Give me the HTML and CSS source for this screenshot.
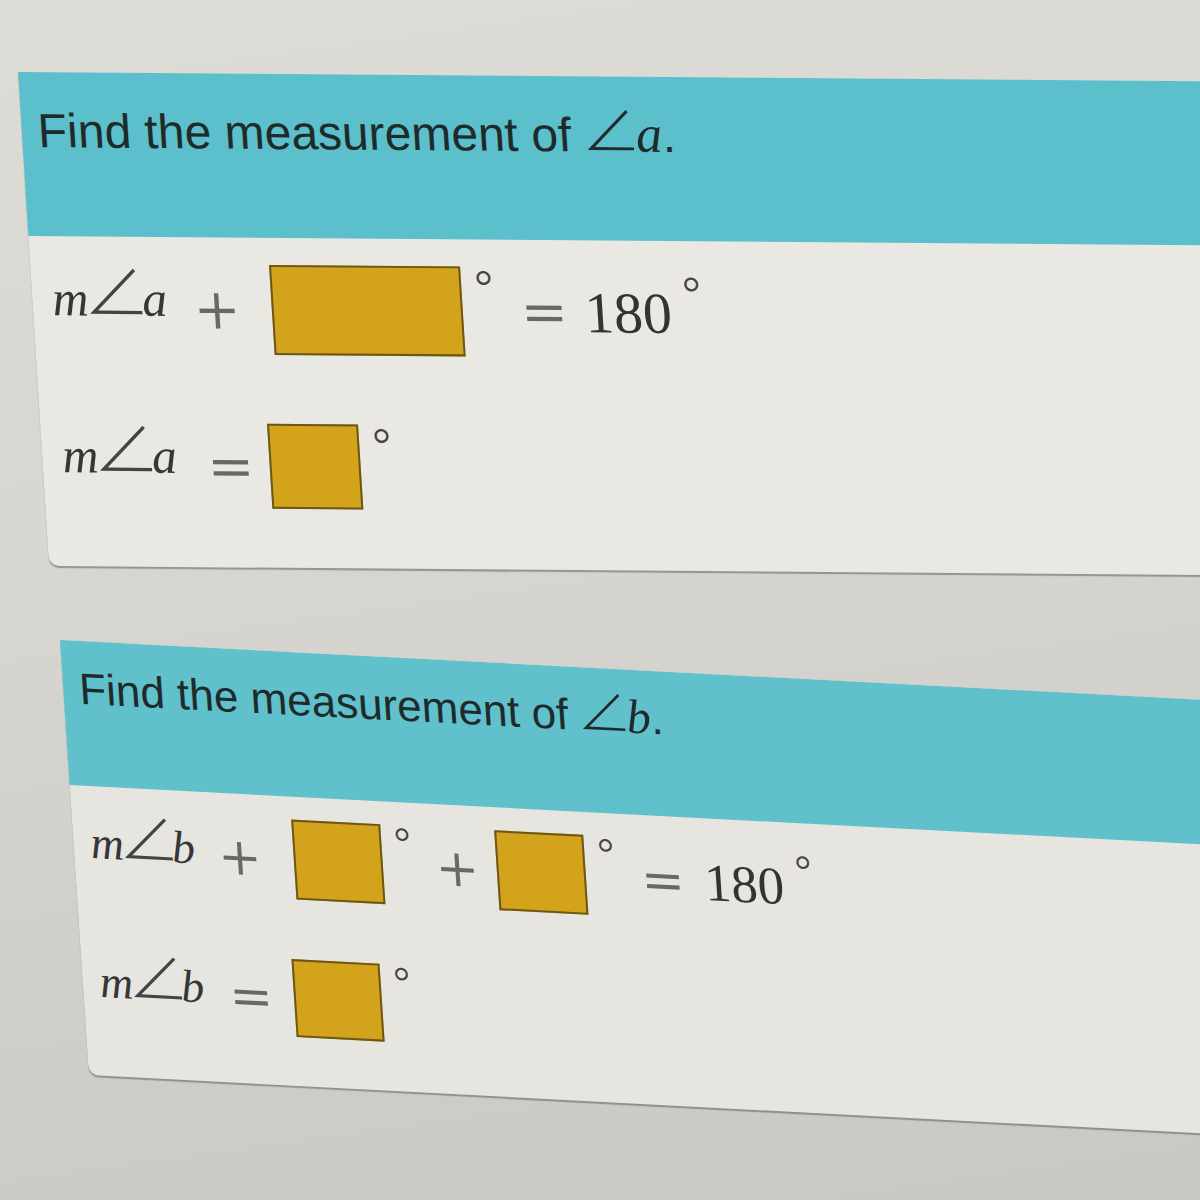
FILE: index.html
```html
<!DOCTYPE html>
<html lang="en">
<head>
<meta charset="utf-8">
<title>Find the measurement of an angle</title>
<link rel="stylesheet" href="styles.css">
</head>
<body>
<main class="page">
  <section class="card card-a">
    <div class="card-head">
      <p class="prompt">Find the measurement of <span class="pm"><span class="ang">∠</span><i>a</i></span>.</p>
    </div>
    <div class="card-body">
      <div class="eq eq-1">
        <span class="lbl"><i>m</i><span class="ang">∠</span><i>a</i></span>
        <span class="op op-plus">+</span>
        <span class="box box-wide"></span>
        <span class="deg">°</span>
        <span class="rhs"><span class="op op-eq">=</span><span class="num">180</span><span class="deg">°</span></span>
      </div>
      <div class="eq eq-2">
        <span class="lbl"><i>m</i><span class="ang">∠</span><i>a</i></span>
        <span class="op op-eq">=</span>
        <span class="box box-sq"></span>
        <span class="deg">°</span>
      </div>
    </div>
  </section>

  <section class="card card-b">
    <div class="card-head">
      <p class="prompt">Find the measurement of <span class="pm"><span class="ang">∠</span><i>b</i></span>.</p>
    </div>
    <div class="card-body">
      <div class="eq eq-1">
        <span class="lbl"><i>m</i><span class="ang">∠</span><i>b</i></span>
        <span class="op op-plus">+</span>
        <span class="box"></span>
        <span class="deg">°</span>
        <span class="op op-plus op-mid">+</span>
        <span class="box"></span>
        <span class="deg">°</span>
        <span class="rhs"><span class="op op-eq">=</span><span class="num">180</span><span class="deg">°</span></span>
      </div>
      <div class="eq eq-2">
        <span class="lbl"><i>m</i><span class="ang">∠</span><i>b</i></span>
        <span class="op op-eq">=</span>
        <span class="box"></span>
        <span class="deg">°</span>
      </div>
    </div>
  </section>
</main>
</body>
</html>
```

FILE: styles.css
```css
* {
  box-sizing: border-box;
}

html,
body {
  margin: 0;
  height: 100%;
  overflow: hidden;
}

body {
  background: linear-gradient(172deg, #dedcd6 0%, #d7d5cf 45%, #cac8c2 100%);
  font-family: "Liberation Sans", Arial, sans-serif;
  color: #222;
}

.page {
  padding: 72px 0 0 18px;
}

/* ---------- cards ---------- */

.card {
  width: 1340px;
  transform-origin: 0 0;
  background: #e9e8e3;
  border-bottom-left-radius: 10px;
  box-shadow: 0 2px 1px rgba(95, 92, 86, 0.55);
}

.card-a {
  transform: skew(3.6deg, 0.45deg);
}

.card-b {
  margin: 74px 0 0 42px;
  transform: skew(3.8deg, 3deg);
  background: #e6e5e0;
}

.card-head {
  background: #5cbfcc;
}

.card-a .card-head {
  padding: 31px 16px 78px;
}

.card-b .card-head {
  padding: 23px 16px 71px;
  background: #60c0cb;
}

.prompt {
  margin: 0;
  line-height: 1.15;
  color: #1f2b2a;
  white-space: nowrap;
}

.card-a .prompt {
  font-size: 48px;
}

.card-b .prompt {
  font-size: 44px;
}

.pm {
  font-family: "Liberation Serif", "DejaVu Serif", serif;
  line-height: 0;
}

.pm i {
  font-size: 1.1em;
  margin-left: 1px;
}

.ang {
  font-family: "Noto Sans CJK JP", "DejaVu Sans", sans-serif;
  font-style: normal;
  font-weight: 300;
  line-height: 0;
}

.prompt .ang {
  font-size: 1.25em;
  margin: 0 -6px 0 -4px;
}

/* ---------- equations ---------- */

.card-body {
  display: flex;
  flex-direction: column;
}

.card-a .card-body {
  padding: 27px 16px 59px 20px;
  gap: 69px;
}

.card-b .card-body {
  padding: 23px 14px 49px 17px;
  gap: 60px;
}

.eq {
  display: flex;
  align-items: center;
}

.lbl {
  font-family: "Liberation Serif", "DejaVu Serif", serif;
  line-height: 1;
  color: #363636;
  white-space: nowrap;
}

.lbl .ang {
  font-size: 1.35em;
  margin: 0 -8px 0 -6px;
  color: #444;
}

.card-a .lbl {
  font-size: 50px;
  margin-bottom: 20px;
}

.card-b .lbl {
  font-size: 46px;
  margin-bottom: 11px;
}

.op {
  font-family: "DejaVu Serif", "Liberation Serif", serif;
  line-height: 1;
  color: #686868;
}

.card-a .op {
  font-size: 56px;
}

.card-b .op {
  font-size: 52px;
}

.card-a .eq-1 .op-plus {
  margin: 0 31px 0 26px;
}

.card-a .eq-2 .op-eq {
  margin: 0 15px 0 30px;
}

.card-b .eq-1 .op-plus {
  margin: 0 32px 0 23px;
}

.card-b .eq-1 .op-mid {
  margin: 0 18px 0 23px;
}

.card-b .eq-2 .op-eq {
  margin: 0 21px 0 25px;
}

.box {
  flex: none;
  background: #d4a31c;
  border: 2px solid #6b5719;
}

.card-a .box-wide {
  width: 191px;
  height: 90px;
}

.card-a .box-sq {
  width: 91px;
  height: 85px;
}

.card-b .box {
  width: 89px;
  height: 80px;
}

.card-b .eq-2 .box {
  width: 88px;
  height: 78px;
}

.deg {
  align-self: flex-start;
  font-family: "Liberation Serif", "DejaVu Serif", serif;
  line-height: 1;
  color: #444;
}

.card-a .deg {
  font-size: 46px;
  margin: -3px 0 0 14px;
}

.card-b .deg {
  font-size: 42px;
  margin: -4px 0 0 13px;
}

.rhs {
  align-self: flex-start;
  display: flex;
  align-items: flex-start;
}

.card-a .rhs {
  margin: 17px 0 0 26px;
}

.card-b .rhs {
  margin: 15px 0 0 25px;
}

.card-a .rhs .op-eq {
  margin-right: 17px;
}

.card-b .rhs .op-eq {
  margin-right: 20px;
}

.num {
  font-family: "Liberation Serif", "DejaVu Serif", serif;
  line-height: 1;
  color: #333;
}

.card-a .num {
  font-size: 58px;
}

.card-b .num {
  font-size: 53px;
}

.card-a .rhs .deg {
  margin: -15px 0 0 12px;
}

.card-b .rhs .deg {
  margin: -12px 0 0 12px;
}
```
